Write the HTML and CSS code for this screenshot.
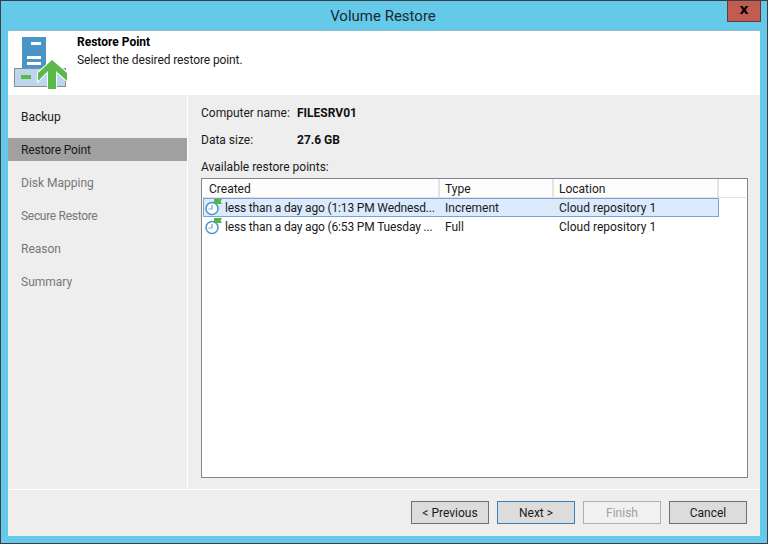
FILE: index.html
```html
<!DOCTYPE html>
<html lang="en">
<head>
<meta charset="utf-8">
<title>Volume Restore</title>
<link rel="stylesheet" href="styles.css">
</head>
<body>
<div class="window">
  <div class="titlebar">
    <span class="title">Volume Restore</span>
    <span class="close">x</span>
  </div>
  <div class="client">
    <header class="banner">
      <svg class="banner-icon" width="58" height="62" viewBox="0 0 58 62">
        <rect x="9" y="6" width="24" height="32" fill="#4b94c8"/>
        <rect x="18" y="11" width="10" height="3" fill="#fff"/>
        <rect x="14" y="25" width="14" height="3" fill="#fff"/>
        <rect x="14" y="31" width="14" height="3" fill="#fff"/>
        <rect x="1.5" y="37.5" width="51" height="18" fill="#bcd6ee" stroke="#8c8c8c"/>
        <rect x="8" y="44" width="10" height="4" fill="#5bb84b"/>
        <path class="arrow" d="M39 29 L54 42 L54 50 L43 40 L43 58 L35 58 L35 40 L25 50 L25 42 Z"/>
      </svg>
      <div class="banner-text">
        <div class="banner-title">Restore Point</div>
        <div class="banner-sub">Select the desired restore point.</div>
      </div>
    </header>
    <div class="middle">
      <nav class="steps">
        <div class="step">Backup</div>
        <div class="step current">Restore Point</div>
        <div class="step muted">Disk Mapping</div>
        <div class="step muted tight">Secure Restore</div>
        <div class="step muted">Reason</div>
        <div class="step muted">Summary</div>
      </nav>
      <main class="content">
        <div class="field"><span class="label">Computer name:</span><strong class="value">FILESRV01</strong></div>
        <div class="field"><span class="label">Data size:</span><strong class="value">27.6 GB</strong></div>
        <div class="list-label">Available restore points:</div>
        <div class="list">
          <div class="head">
            <div class="cell c1">Created</div>
            <div class="cell c2">Type</div>
            <div class="cell c3">Location</div>
          </div>
          <div class="row selected">
            <div class="cell c1">
              <svg class="clock" width="18" height="18" viewBox="0 0 18 18"><circle cx="7" cy="9.500" r="6" fill="#fff" stroke="#4b94c8" stroke-width="1.500"/><path d="M7 6V10H3.500" fill="none" stroke="#6aaad6" stroke-width="1.200"/><path d="M9 0H17L15.500 2.500L17 5H9Z" fill="#4fb848"/></svg>
              <span class="stamp">less than a day ago (1:13 PM Wednesd...</span>
            </div>
            <div class="cell c2">Increment</div>
            <div class="cell c3">Cloud repository 1</div>
          </div>
          <div class="row">
            <div class="cell c1">
              <svg class="clock" width="18" height="18" viewBox="0 0 18 18"><circle cx="7" cy="9.500" r="6" fill="#fff" stroke="#4b94c8" stroke-width="1.500"/><path d="M7 6V10H3.500" fill="none" stroke="#6aaad6" stroke-width="1.200"/><path d="M9 0H17L15.500 2.500L17 5H9Z" fill="#4fb848"/></svg>
              <span class="stamp">less than a day ago (6:53 PM Tuesday ...</span>
            </div>
            <div class="cell c2">Full</div>
            <div class="cell c3">Cloud repository 1</div>
          </div>
        </div>
      </main>
    </div>
    <footer class="footer">
      <button class="btn">&lt; Previous</button>
      <button class="btn default">Next &gt;</button>
      <button class="btn disabled">Finish</button>
      <button class="btn">Cancel</button>
    </footer>
  </div>
</div>
</body>
</html>
```
FILE: styles.css
```css
* { box-sizing: border-box; }
html, body { margin: 0; padding: 0; }
body {
  width: 768px;
  height: 544px;
  overflow: hidden;
  font-family: Roboto, "Noto Sans", sans-serif;
  font-size: 12px;
  color: #1a1a1a;
}
.window {
  width: 768px;
  height: 544px;
  background: #65c9ea;
  border: 1px solid #3c3f41;
  display: flex;
  flex-direction: column;
  padding: 0 7px 7px;
}
.titlebar {
  height: 29px;
  flex: none;
  position: relative;
  display: flex;
  align-items: center;
  justify-content: center;
}
.title { font-size: 15px; color: #1c2a30; margin-right: 2px; }
.close {
  position: absolute;
  top: 0;
  right: -1px;
  width: 34px;
  height: 21px;
  background: #c25b50;
  border: 1px solid #5e3a3a;
  border-top: 0;
  color: #000;
  font: bold 14px/17px "DejaVu Sans", sans-serif;
  text-align: center;
}
.client {
  flex: 1;
  min-height: 0;
  display: flex;
  flex-direction: column;
  background: #eeeeee;
}
.banner {
  height: 65px;
  flex: none;
  background: #fff;
  display: flex;
  border-top: 1px solid #8fb8cc;
}
.banner-icon { margin-left: 5px; flex: none; }
.arrow { fill: #5bb84b; stroke: #fff; stroke-width: 2; paint-order: stroke; }
.banner-text { margin-left: 6px; padding-top: 3px; }
.banner-title { font-weight: 700; line-height: 16px; color: #000; }
.banner-sub { line-height: 20px; letter-spacing: -0.1px; }
.middle { flex: 1; min-height: 0; display: flex; }
.steps {
  width: 180px;
  flex: none;
  border-right: 1px solid #fff;
  padding-top: 10px;
  display: flex;
  flex-direction: column;
  gap: 10px;
}
.step { height: 23px; line-height: 23px; padding: 1px 0 0 13px; }
.step.current { background: #a0a0a0; letter-spacing: -0.15px; }
.step.muted { color: #777; }
.step.tight { letter-spacing: -0.3px; }
.content { flex: 1; min-width: 0; padding: 10px 12px 11px 13px; display: flex; flex-direction: column; }
.field { display: flex; height: 27px; line-height: 17px; }
.label { width: 96px; flex: none; }
.value { font-weight: 700; color: #111; }
.list-label { line-height: 17px; }
.list {
  margin-top: 2px;
  flex: 1;
  min-height: 0;
  background: #fff;
  border: 1px solid #85858f;
  padding: 0 1px;
}
.cell { white-space: nowrap; padding-left: 6px; overflow: hidden; }
.c1 { width: 236px; }
.c2 { width: 114px; }
.c3 { width: 166px; }
.head {
  height: 19px;
  display: flex;
  line-height: 20px;
  background: #fff;
  border-bottom: 1px solid #e2e2e2;
}
.head .cell { background: #fdfdfd; border-right: 2px solid #e4e4e4; }
.head .c1 { width: 237px; }
.head .c2 { padding-left: 5px; }
.head .c3 { width: 165px; padding-left: 5px; }
.row { display: flex; height: 19px; line-height: 21px; width: 516px; }
.row .c1 { display: flex; align-items: center; padding-left: 2px; gap: 2px; }
.stamp { letter-spacing: -0.16px; padding-top: 1px; }
.selected { background: #dbeafc; outline: 1px solid #7da2ce; outline-offset: -1px; }
.clock { flex: none; }
.footer {
  height: 47px;
  flex: none;
  border-top: 1px solid #fff;
  display: flex;
  justify-content: flex-end;
  align-items: flex-start;
  gap: 8px;
  padding: 11px 13px 0 0;
}
.btn {
  width: 78px;
  height: 23px;
  padding: 0;
  background: #dcdcdc;
  border: 1px solid #707070;
  font: 12px Roboto, "Noto Sans", sans-serif;
  color: #1a1a1a;
}
.btn.default { border-color: #3a7fb0; }
.btn.disabled { background: #f1f1f1; border-color: #b0b0b0; color: #a0a0a0; }
```
